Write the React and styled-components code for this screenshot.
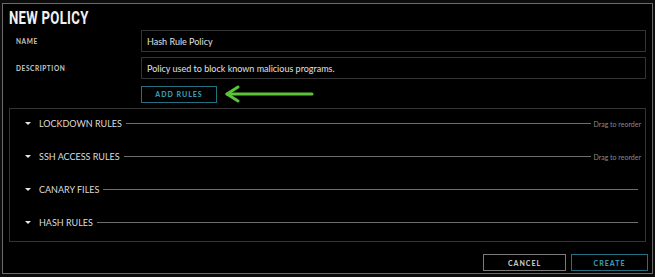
import React from 'react';
import styled, { createGlobalStyle } from 'styled-components';

const Global = createGlobalStyle`
  html, body {
    margin: 0;
    background: #0c0c0c;
  }
  body {
    font-family: 'Lato', 'Open Sans', sans-serif;
  }
`;

const Frame = styled.div`
  margin: 3px 2px 0 2px;
  width: 651px;
  height: 271px;
  box-sizing: border-box;
  border: 1px solid #6a6a6a;
  background: #000;
  padding: 0 6px 0 6px;
  display: flex;
  flex-direction: column;
`;

const Title = styled.h1`
  margin: 0;
  padding-top: 2px;
  height: 24px;
  line-height: 24px;
  font-family: 'Roboto', 'Lato', sans-serif;
  font-weight: 700;
  font-size: 18px;
  color: #f2f2f2;
  letter-spacing: 0.4px;
  transform: scaleX(0.73);
  transform-origin: left center;
  white-space: nowrap;
`;

const Form = styled.div`
  display: grid;
  grid-template-columns: 132px 1fr;
  row-gap: 5px;
  align-items: center;
`;

const Label = styled.div`
  padding-left: 7px;
  font-size: 6.5px;
  font-weight: 700;
  letter-spacing: 0.6px;
  color: #c8c8c8;
`;

const Input = styled.div`
  height: 22px;
  box-sizing: border-box;
  border: 1px solid #333;
  padding-left: 5px;
  display: flex;
  align-items: center;
  font-size: 9px;
  color: #e0e0e0;
`;

const ActionRow = styled.div`
  grid-column: 2;
  display: flex;
  align-items: center;
  margin-top: 1px;
`;

const Button = styled.button`
  height: 17px;
  width: ${p => p.$w}px;
  box-sizing: border-box;
  background: #000;
  border: 1px solid ${p => (p.$primary ? '#246f80' : '#7a7a7a')};
  color: ${p => (p.$primary ? '#3a98b0' : '#c4c4c4')};
  font-family: 'Lato', sans-serif;
  font-size: 7px;
  font-weight: 900;
  letter-spacing: 1px;
  padding: 0;
`;

const Panel = styled.div`
  margin-top: 5px;
  border: 1px solid #333;
  display: flex;
  flex-direction: column;
`;

const Row = styled.div`
  height: 33px;
  box-sizing: border-box;
  padding: 0 4px 4px 15px;
  display: flex;
  align-items: center;
`;

const Caret = styled.span`
  width: 0;
  height: 0;
  border-left: 3px solid transparent;
  border-right: 3px solid transparent;
  border-top: 3.5px solid #e8e8e8;
  margin-right: 8px;
`;

const RowTitle = styled.span`
  font-size: 9px;
  color: #dcdcdc;
`;

const Rule = styled.span`
  flex: 1;
  height: 1px;
  background: #6e6e6e;
  margin: 0 ${p => (p.$end ? 3 : 2)}px 0 4px;
`;

const Hint = styled.span`
  font-size: 7px;
  color: #8a8a8a;
`;

const Footer = styled.div`
  margin-top: 12px;
  margin-right: -2px;
  display: flex;
  justify-content: flex-end;
  gap: 5px;
`;

const Arrow = () => (
  <svg width="92" height="18" viewBox="0 0 92 18" style={{ marginLeft: 7 }}>
    <g stroke="#5cc23a" strokeWidth="3" strokeLinecap="round" strokeLinejoin="round" fill="none">
      <line x1="3" y1="9" x2="88" y2="9" />
      <polyline points="14,2 3,9 14,16" />
    </g>
  </svg>
);

const rules = [
  { name: 'LOCKDOWN RULES', drag: true },
  { name: 'SSH ACCESS RULES', drag: true },
  { name: 'CANARY FILES' },
  { name: 'HASH RULES' },
];

export default function App() {
  return (
    <>
      <Global />
      <Frame>
        <Title>NEW POLICY</Title>
        <Form>
          <Label>NAME</Label>
          <Input>Hash Rule Policy</Input>
          <Label>DESCRIPTION</Label>
          <Input>Policy used to block known malicious programs.</Input>
          <ActionRow>
            <Button $primary $w={76}>ADD RULES</Button>
            <Arrow />
          </ActionRow>
        </Form>
        <Panel>
          {rules.map(r => (
            <Row key={r.name}>
              <Caret />
              <RowTitle>{r.name}</RowTitle>
              <Rule $end={!r.drag} />
              {r.drag && <Hint>Drag to reorder</Hint>}
            </Row>
          ))}
        </Panel>
        <Footer>
          <Button $w={83}>CANCEL</Button>
          <Button $primary $w={77}>CREATE</Button>
        </Footer>
      </Frame>
    </>
  );
}
